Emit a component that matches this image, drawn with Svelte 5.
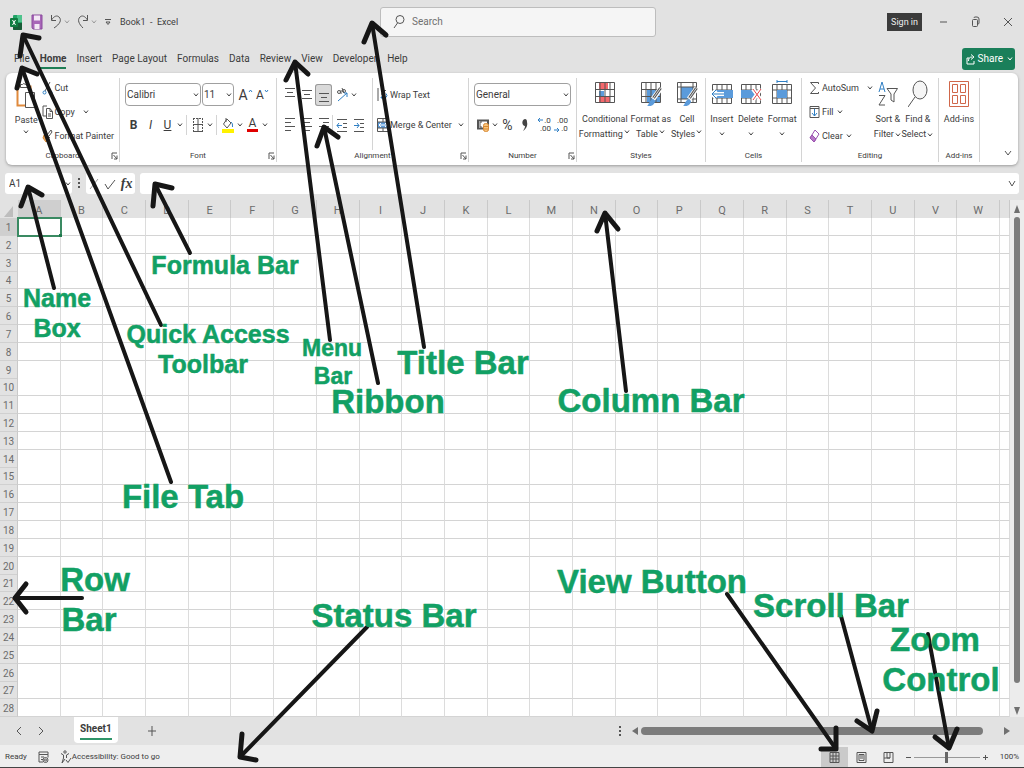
<script>
  let search = $state('');
  let cellName = $state('A1');
  let formula = $state('');
  let zoom = $state(50);
  let activeTab = $state('Home');

  const tabs = ['File', 'Home', 'Insert', 'Page Layout', 'Formulas', 'Data', 'Review', 'View', 'Developer', 'Help'];
  const columns = 'ABCDEFGHIJKLMNOPQRSTUVW'.split('');
  const rows = Array.from({ length: 28 }, (_, i) => i + 1);

  // tail, tip, then the two ends of the head
  const arrows = [
    [54, 288, 28, 187, 21, 206, 42, 195],
    [161, 325, 23, 35, 20, 56, 39, 38],
    [171, 482, 22, 68, 17, 88, 37, 74],
    [190, 253, 155, 184, 153, 206, 172, 188],
    [330, 340, 295, 62, 286, 80, 308, 74],
    [378, 383, 324, 127, 317, 146, 338, 137],
    [424, 347, 372, 23, 364, 42, 386, 35],
    [626, 391, 605, 213, 597, 231, 618, 229],
    [82, 598, 15, 598, 26, 584, 26, 612],
    [367, 627, 240, 757, 242, 734, 256, 760],
    [727, 594, 836, 749, 836, 728, 821, 749],
    [841, 616, 872, 731, 857, 721, 877, 711],
    [928, 634, 949, 748, 935, 737, 957, 729],
  ];

  const notes = [
    { text: 'Name', x: 57, y: 307, size: 'small' },
    { text: 'Box', x: 57, y: 337, size: 'small' },
    { text: 'Formula Bar', x: 225, y: 274, size: 'small' },
    { text: 'Quick Access', x: 208, y: 343, size: 'small' },
    { text: 'Toolbar', x: 203, y: 373, size: 'small' },
    { text: 'Menu', x: 332, y: 356, size: 'tiny' },
    { text: 'Bar', x: 333, y: 384, size: 'tiny' },
    { text: 'Title Bar', x: 463, y: 374, size: 'large' },
    { text: 'Ribbon', x: 388, y: 413, size: 'large' },
    { text: 'Column Bar', x: 651, y: 412, size: 'large' },
    { text: 'File Tab', x: 183, y: 508, size: 'large' },
    { text: 'Row', x: 95, y: 591, size: 'large' },
    { text: 'Bar', x: 89, y: 631, size: 'large' },
    { text: 'Status Bar', x: 394, y: 627, size: 'large' },
    { text: 'View Button', x: 652, y: 593, size: 'large' },
    { text: 'Scroll Bar', x: 831, y: 617, size: 'large' },
    { text: 'Zoom', x: 935, y: 651, size: 'large' },
    { text: 'Control', x: 941, y: 691, size: 'large' },
  ];
</script>

{#snippet chev()}
  <svg class="chev" width="8" height="8" viewBox="0 0 8 8"><path d="M2 2.500 4 5l2-2.500" /></svg>
{/snippet}

{#snippet launcher()}
  <svg class="launcher" width="7" height="8" viewBox="0 0 7 8"><path d="M1 7V1h5M2.500 3 6 7M6 3.500V7H3" /></svg>
{/snippet}

{#snippet bars(widths, from, top)}
  <svg width="12" height="16" viewBox="0 0 12 16">
    {#each widths as w, i}
      <path d="M{from === 'left' ? 1 : from === 'right' ? 11 - w : 6 - w / 2} {top + i * 4 + 0.5}h{w}" />
    {/each}
  </svg>
{/snippet}

{#snippet indent(dir)}
  <svg width="12" height="16" viewBox="0 0 12 16">
    <path d="M1 2.500h10M7 6.500h4M7 10.500h4M1 14.500h10" />
    <path class="blue" d={dir === 'out' ? 'M6 8.500H1M3 6 1 8.500 3 11' : 'M1 8.500h5M4 6l2 2.500L4 11'} />
  </svg>
{/snippet}

{#snippet gridIcon(kind)}
  <svg width="22" height="26" viewBox="0 0 22 26">
    {#if kind === 'conditional'}
      <path class="redfill" d="M5 3h9v7H5zM5 17h11v6H5z" />
      <path class="bluefill" d="M5 11h5v5H5z" />
    {:else if kind === 'table'}
      <path class="bluefill" d="M7 9h13v14H7z" />
    {:else if kind === 'cell'}
      <path class="bluefill" d="M5 7h12v12H5z" />
    {/if}
    {#if kind === 'cell'}
      <path d="M1.500 2.500h19v20h-19zM1.500 7h19M1.500 19h19M5 2.500v20M17 2.500v20" />
    {:else}
      <path d="M1.500 2.500h19v20h-19zM1.500 9.500h19M1.500 16.500h19M6 2.500v20M11 2.500v20M16 2.500v20" />
    {/if}
    {#if kind !== 'conditional'}
      <path d="m21 8-8 11" style:stroke="#fff" style:stroke-width="5" />
      <path d="m20.500 8-7 10" style:stroke-width="3" />
      <path d="m20.500 8-7 10" style:stroke="#ddd" />
      <path class="bluefill" d="M7 26c2-1 2-6 6-7l2 2c0 3-3 6-8 5Z" />
    {/if}
  </svg>
{/snippet}

{#snippet cellIcon(kind)}
  <svg width="22" height="28" viewBox="0 0 22 28">
    <path d="M1.500 4.500h19v19h-19zM1.500 10h19M1.500 18h19M6 4.500v19M11 4.500v19M16 4.500v19" />
    {#if kind === 'insert'}
      <path class="bluefill" d="M5 10h17v8H5z" />
      <path class="halo" d="M1 14h12M5 10l-4 4 4 4" />
      <path class="blue" d="M1 14h12M5 10l-4 4 4 4" />
    {:else if kind === 'delete'}
      <path class="bluefill" d="M1 10h12l3 4-3 4H1z" />
      <path class="halo" d="m13 9 8 11M21 9l-8 11" />
      <path class="red" d="m13 9 8 11M21 9l-8 11" />
    {:else}
      <path class="bluefill" d="M6 10h10v8H6z" />
      <path class="blue" d="M6 1.500h10M6 0v3M16 0v3" />
    {/if}
  </svg>
{/snippet}

<div class="app">
  <header class="title-bar">
    <div class="quick">
      <svg width="13" height="17" viewBox="0 0 13 17">
        <rect x="3" y="1" width="9" height="15" rx="1" fill="#21a366" style:stroke="none" />
        <path d="M7 1h4a1 1 0 0 1 1 1v6H7z" fill="#4fc48d" style:stroke="none" />
        <path d="M3 9h9v6a1 1 0 0 1-1 1H4a1 1 0 0 1-1-1z" fill="#185c37" style:stroke="none" />
        <rect x="0" y="4" width="8" height="9" rx="1" fill="#107c41" style:stroke="none" />
        <path d="m2.500 6 3 5M5.500 6l-3 5" style:stroke="#fff" />
      </svg>
      <button aria-label="Save" class="save">
        <svg width="12" height="16" viewBox="0 0 12 16">
          <path d="M1 1h10v14H2l-1-1.500z" fill="#a866b8" style:stroke="#8a4a9d" />
          <path d="M3 1.500h6v5H3zM3.500 10h5v5h-5z" fill="#f3e8f5" style:stroke="none" />
        </svg>
      </button>
      <button aria-label="Undo"><svg width="12" height="16" viewBox="0 0 12 16"><path d="M1.500 1v5.500H6M1.500 6C4 2 7 1 9 3c3 3 1 7-5 11" /></svg></button>
      {@render chev()}
      <button aria-label="Redo" class="redo"><svg width="12" height="16" viewBox="0 0 12 16"><path d="M10.500 1v5.500H6M10.500 6C8 2 5 1 3 3c-3 3-1 7 3 11" /></svg></button>
      {@render chev()}
      <button aria-label="Customize toolbar" class="customize"><svg width="8" height="8" viewBox="0 0 8 8"><path d="M1 1.500h6M2 4l2 2.500L6 4z" /></svg></button>
      <span class="doc">Book1&nbsp; -&nbsp; Excel</span>
    </div>
    <label class="search">
      <svg width="12" height="16" viewBox="0 0 12 16"><circle cx="7" cy="5.500" r="4" /><path d="M4.500 9 1 14" /></svg>
      <input type="text" placeholder="Search" aria-label="Search" bind:value={search} />
    </label>
    <div class="window">
      <button class="sign-in">Sign in</button>
      <button aria-label="Minimize"><svg width="10" height="12" viewBox="0 0 10 12"><path d="M1 6h7" /></svg></button>
      <button aria-label="Restore"><svg width="10" height="12" viewBox="0 0 10 12"><rect x="1.500" y="3.500" width="5" height="7" rx="1" /><path d="M3 2q0-1 1-1h2q2 0 2 2v4q0 1-1 1" /></svg></button>
      <button aria-label="Close"><svg width="10" height="12" viewBox="0 0 10 12"><path d="m1 2 8 8M9 2l-8 8" /></svg></button>
    </div>
  </header>

  <nav class="tabs">
    {#each tabs as tab}
      <button class:active={tab === activeTab} onclick={() => (activeTab = tab)}>{tab}</button>
    {/each}
    <button class="share">
      <svg width="9" height="12" viewBox="0 0 9 12"><path d="M3 5H1v6h7V8M2.500 8c0-3 1-4 4-4M5 1.500 8 4 5 6.500" /></svg>
      Share {@render chev()}
    </button>
  </nav>

  <section class="ribbon">
    <div class="group">
      <div class="body clipboard">
        <button class="big paste">
          <svg width="20" height="27" viewBox="0 0 20 27">
            <path d="M1.500 4.500h13v19h-13z" style:stroke="#e08a3c" style:stroke-width="2" />
            <path d="M4.500 5.500v-3h2q1-2 3 0h2v3z" fill="#fff" />
            <path d="M9.500 10.500h9v15h-9z" fill="#fff" />
          </svg>
          <span>Paste</span>{@render chev()}
        </button>
        <div class="stack">
          <button><svg width="11" height="14" viewBox="0 0 11 14"><path d="M3 1l5 9M8 1 3 10" /><circle class="blue" cx="2.500" cy="11.500" r="1.500" /><circle class="blue" cx="8.500" cy="11.500" r="1.500" /></svg>Cut</button>
          <button><svg width="11" height="14" viewBox="0 0 11 14"><path d="M4 11H1V1h4M4.500 3.500H8l2.500 3v7h-6zM8 3.500v3h2.500M6 9h3M6 11h3" /></svg>Copy <i></i>{@render chev()}</button>
          <button><svg width="11" height="14" viewBox="0 0 11 14"><path d="m5 6 4-5 1 2-3 4M3 5l5 4" /><path d="m2 6 5 4-3 3-3-4z" fill="#eaa55d" style:stroke="#d98a35" /></svg>Format Painter</button>
        </div>
      </div>
      <div class="caption">Clipboard{@render launcher()}</div>
    </div>

    <div class="group">
      <div class="body two-rows">
        <div class="line">
          <div class="pick font-name"><select aria-label="Font"><option>Calibri</option></select>{@render chev()}</div>
          <div class="pick font-size"><select aria-label="Font size"><option>11</option></select>{@render chev()}</div>
          <button class="tool gap" aria-label="Increase font size"><span class="grow">A</span><svg width="5" height="12" viewBox="0 0 5 12"><path class="blue" d="m1 3 1.500-2L4 3" /></svg></button>
          <button class="tool" aria-label="Decrease font size"><span>A</span><svg width="5" height="12" viewBox="0 0 5 12"><path class="blue" d="m1 1 1.500 2L4 1" /></svg></button>
        </div>
        <div class="line">
          <button class="tool"><b>B</b></button>
          <button class="tool"><em>I</em></button>
          <button class="tool"><u>U</u></button>
          {@render chev()}<hr />
          <button class="tool" aria-label="Borders"><svg width="12" height="16" viewBox="0 0 12 16"><path d="M1 1.500h10M1.500 1v13M10.500 1v13" stroke-dasharray="2 1" /><path d="M1 14.500h10M1 7.500h10M6 1v13" /></svg></button>
          {@render chev()}<hr />
          <button class="tool" aria-label="Fill color"><svg width="12" height="16" viewBox="0 0 12 16"><path d="M5 2 1.500 7 5 11l4-5zM4 1v4" /><path class="blue" d="M9 5q2 1 1.500 5" /><path d="M0 12h12v4H0z" fill="#fff200" style:stroke="none" /></svg></button>
          {@render chev()}
          <button class="tool" aria-label="Font color"><span class="font-color">A</span></button>
          {@render chev()}
        </div>
      </div>
      <div class="caption">Font{@render launcher()}</div>
    </div>

    <div class="group">
      <div class="body alignment">
        <div class="two-rows">
          <div class="line">
            <button class="tool" aria-label="Top align">{@render bars([10, 6, 10], 'center', 1)}</button>
            <button class="tool" aria-label="Middle align">{@render bars([10, 6, 10], 'center', 3)}</button>
            <button class="tool pressed" aria-label="Bottom align">{@render bars([10, 6, 10], 'center', 6)}</button>
            <hr />
            <button class="tool" aria-label="Orientation"><svg width="12" height="16" viewBox="0 0 12 16"><circle cx="3" cy="5" r="1.500" /><path d="M5 3v4M6 1l2 5" /><circle cx="8" cy="4" r="1.500" /><path class="blue" d="m2 14 9-8M8 6h3v4" /></svg></button>
            {@render chev()}
          </div>
          <div class="line">
            <button class="tool" aria-label="Align left">{@render bars([10, 6, 10, 6], 'left', 1)}</button>
            <button class="tool" aria-label="Center">{@render bars([10, 6, 10, 6], 'center', 1)}</button>
            <button class="tool" aria-label="Align right">{@render bars([10, 6, 10, 6], 'right', 1)}</button>
            <hr />
            <button class="tool" aria-label="Decrease indent">{@render indent('out')}</button>
            <button class="tool" aria-label="Increase indent">{@render indent('in')}</button>
          </div>
        </div>
        <div class="two-rows wrap">
          <button><svg width="12" height="16" viewBox="0 0 12 16"><path d="M1 1v13M4 3.500h5M4 7h3" /><path class="blue" d="M4 10.500h5q2-2 0-4M6 8.500l-2 2 2 2" /></svg>Wrap Text</button>
          <button><svg width="12" height="16" viewBox="0 0 12 16"><path class="bluefill" d="M1 5h10v6H1z" /><path d="M.500 1.500h11v13H.500zM.500 5h11M.500 11h11M6 1.500V5M6 11v3.500" /><path d="M2 8h8M4 6 2 8l2 2M8 6l2 2-2 2" style:stroke="#fff" /></svg>Merge &amp; Center <i></i>{@render chev()}</button>
        </div>
      </div>
      <div class="caption">Alignment{@render launcher()}</div>
    </div>

    <div class="group">
      <div class="body two-rows">
        <div class="line"><div class="pick format"><select aria-label="Number format"><option>General</option></select>{@render chev()}</div></div>
        <div class="line">
          <button class="tool" aria-label="Accounting format"><svg width="12" height="16" viewBox="0 0 12 16"><path d="M1 3.500h10v8H1z" style:stroke-width="2" /><path d="M5 5H3v5h2" /><rect x="6.500" y="6.500" width="5" height="8" rx="2" fill="#f6c27a" style:stroke="#d98a35" /><path d="M7 9.500h4M7 12h4" style:stroke="#d98a35" /></svg></button>
          {@render chev()}
          <button class="tool"><span class="sign">%</span></button>
          <button class="tool" aria-label="Comma style"><svg width="8" height="14" viewBox="0 0 8 14"><path d="M6 4c1 4-1 7-4 9 1-2 2-3 2-5C1 8 0 2 4 1q2 0 2 3z" fill="#444" style:stroke="none" /></svg></button>
          <hr />
          <button class="tool decimals"><span>&nbsp; .0</span><span>.00</span><svg width="6" height="6" viewBox="0 0 6 6"><path class="blue" d="M6 3H1M3 1 1 3l2 2" /></svg></button>
          <button class="tool decimals increase"><span>.00</span><span>&nbsp; .0</span><svg width="6" height="6" viewBox="0 0 6 6"><path class="blue" d="M0 3h5M3 1l2 2-2 2" /></svg></button>
        </div>
      </div>
      <div class="caption">Number{@render launcher()}</div>
    </div>

    <div class="group">
      <div class="body bigs styles">
        <button class="big">{@render gridIcon('conditional')}<span>Conditional</span><span>Formatting {@render chev()}</span></button>
        <button class="big">{@render gridIcon('table')}<span>Format as</span><span>Table {@render chev()}</span></button>
        <button class="big">{@render gridIcon('cell')}<span>Cell</span><span>Styles {@render chev()}</span></button>
      </div>
      <div class="caption">Styles</div>
    </div>

    <div class="group">
      <div class="body bigs cells">
        <button class="big">{@render cellIcon('insert')}<span>Insert</span>{@render chev()}</button>
        <button class="big">{@render cellIcon('delete')}<span>Delete</span>{@render chev()}</button>
        <button class="big">{@render cellIcon('format')}<span>Format</span>{@render chev()}</button>
      </div>
      <div class="caption">Cells</div>
    </div>

    <div class="group">
      <div class="body editing">
        <div class="stack">
          <button><svg width="11" height="14" viewBox="0 0 11 14"><path d="M9.500 3V1.500h-8l5 5.500-5 5.500h8V11" /></svg>AutoSum <i></i>{@render chev()}</button>
          <button><svg width="11" height="14" viewBox="0 0 11 14"><path d="M1 1.500h9v11H1zM1 3.500h9" /><path class="blue" d="M5.500 4v7M3 8l2.500 3L8 8" /></svg>Fill {@render chev()}</button>
          <button><svg width="11" height="14" viewBox="0 0 11 14"><path d="m6 1 4 4-5 8-4-4z" fill="#fff" style:stroke="#9b4fb0" /><path d="m3 6 4 4-2 3-4-4z" fill="#b678c6" style:stroke="#9b4fb0" /></svg>Clear {@render chev()}</button>
        </div>
        <button class="big">
          <svg width="20" height="28" viewBox="0 0 20 28"><path class="blue" d="m1 12 3-10 3 10M2 9h4" /><path d="M1 15.500h6L1 25h6M9 8.500h10.500L16 14v8l-3-2v-6z" /></svg>
          <span>Sort &amp;</span><span>Filter {@render chev()}</span>
        </button>
        <button class="big">
          <svg width="20" height="28" viewBox="0 0 20 28"><ellipse cx="12" cy="10" rx="7" ry="9" fill="#f5f5f5" /><path d="M7 17 0 27" /></svg>
          <span>Find &amp;</span><span>Select {@render chev()}</span>
        </button>
      </div>
      <div class="caption">Editing</div>
    </div>

    <div class="group">
      <div class="body bigs">
        <button class="big">
          <svg width="20" height="28" viewBox="0 0 20 28"><path d="M.500 1.500h19v25H.500zM3.500 4.500h5v8h-5zM11.500 4.500h5v8h-5zM3.500 15.500h5v8h-5zM11.500 15.500h5v8h-5z" style:stroke="#d0674a" /></svg>
          <span>Add-ins</span>
        </button>
      </div>
      <div class="caption">Add-ins</div>
    </div>

    <button class="collapse" aria-label="Collapse ribbon"><svg width="10" height="8" viewBox="0 0 10 8"><path d="m2 2 3 4 3-4" /></svg></button>
  </section>

  <section class="formula-row">
    <div class="name-box"><input type="text" aria-label="Name box" bind:value={cellName} />{@render chev()}</div>
    <svg width="4" height="14" viewBox="0 0 4 14"><path d="M2 1v12" stroke-dasharray="2 2" style:stroke-width="2" /></svg>
    <div class="entry">
      <button aria-label="Cancel"><svg width="10" height="12" viewBox="0 0 10 12"><path d="m1 1 8 10M9 1 1 11" style:stroke="#999" /></svg></button>
      <button aria-label="Enter"><svg width="12" height="12" viewBox="0 0 12 12"><path d="m1 6 3 5 7-9" /></svg></button>
      <button class="fx">fx</button>
    </div>
    <div class="formula"><input type="text" aria-label="Formula" bind:value={formula} /><svg width="10" height="8" viewBox="0 0 10 8"><path d="m2 1 3 5 3-5" /></svg></div>
  </section>

  <main class="sheet">
    <table>
      <thead>
        <tr>
          <th class="corner"><svg width="10" height="13" viewBox="0 0 10 13"><path d="M9 1v11H0z" fill="#bdbdbd" style:stroke="none" /></svg></th>
          {#each columns as col}
            <th class:selected={col === 'A'}>{col}</th>
          {/each}
          <th></th>
        </tr>
      </thead>
      <tbody>
        {#each rows as row}
          <tr>
            <th class:selected={row === 1}>{row}</th>
            {#each columns as col}
              <td class:current={row === 1 && col === 'A'}></td>
            {/each}
            <td></td>
          </tr>
        {/each}
      </tbody>
    </table>
    <div class="scroll-y">
      <svg width="8" height="8" viewBox="0 0 8 8"><path class="tri" d="M4 0 7 8H1z" /></svg>
      <div class="track"><div class="thumb"></div></div>
      <svg width="8" height="8" viewBox="0 0 8 8"><path class="tri" d="M1 0h6L4 8z" /></svg>
    </div>
  </main>

  <section class="sheet-tabs">
    <button class="nav" aria-label="Previous sheet"><svg width="8" height="10" viewBox="0 0 8 10"><path d="M6 1 2 5l4 4" /></svg></button>
    <button class="nav" aria-label="Next sheet"><svg width="8" height="10" viewBox="0 0 8 10"><path d="m2 1 4 4-4 4" /></svg></button>
    <button class="sheet-tab"><span>Sheet1</span></button>
    <button class="add" aria-label="New sheet"><svg width="10" height="12" viewBox="0 0 10 12"><path d="M5 1v10M1 6h8" /></svg></button>
    <div class="scroll-x">
      <svg width="4" height="12" viewBox="0 0 4 12"><path d="M2 1v11" stroke-dasharray="2 2" style:stroke-width="2" /></svg>
      <div class="bar">
        <svg width="6" height="8" viewBox="0 0 6 8"><path class="tri" d="M6 0v8L0 4z" /></svg>
        <div class="track"><div class="thumb"></div></div>
        <svg width="6" height="8" viewBox="0 0 6 8"><path class="tri" d="m0 0 6 4-6 4z" /></svg>
      </div>
    </div>
  </section>

  <footer class="status">
    <span>Ready</span>
    <svg width="11" height="13" viewBox="0 0 11 13"><path d="M1 1h9v2.500H1zM1 3.500V11h4M3 6h3M3 8.500h2M10 3.500v3" /><circle cx="7.500" cy="9" r="2.500" /><circle cx="7.500" cy="9" r="1" /></svg>
    <span class="access"><svg width="12" height="14" viewBox="0 0 12 14"><circle cx="5" cy="2" r="1.200" /><path d="M1 3.500 3.500 5v3L2 13l3-4M9 3.500 6.500 5v3M6 10l2 2.500L11 8" /></svg>Accessibility: Good to go</span>
    <div class="views">
      <button class="on" aria-label="Normal view"><svg width="11" height="13" viewBox="0 0 11 13"><path d="M1 1.500h9v10H1zM1 5h9M1 8h9M4 1.500v10M7 1.500v10" /></svg></button>
      <button aria-label="Page layout view"><svg width="11" height="13" viewBox="0 0 11 13"><path d="M1 1.500h9v10H1zM3 3.500h5v6H3zM4 5h3M4 7h3" /></svg></button>
      <button aria-label="Page break preview"><svg width="11" height="13" viewBox="0 0 11 13"><path d="M1 1.500h9v10H1zM4 1.500V7h3V1.500M7 7H1" /></svg></button>
    </div>
    <div class="zoom">
      <button aria-label="Zoom out"><svg width="7" height="7" viewBox="0 0 7 7"><path d="M1 3.500h5" /></svg></button>
      <input type="range" min="0" max="100" aria-label="Zoom" bind:value={zoom} />
      <button aria-label="Zoom in"><svg width="7" height="7" viewBox="0 0 7 7"><path d="M1 3.500h5M3.500 1v5" /></svg></button>
    </div>
    <span>100%</span>
  </footer>

  <svg class="notes" viewBox="0 0 1024 768">
    {#each arrows as [x1, y1, x2, y2, ax, ay, bx, by]}
      <path class="shaft" d="M{x1} {y1}L{x2} {y2}" />
      <path class="head" d="M{ax} {ay}L{x2} {y2}L{bx} {by}" />
    {/each}
    {#each notes as note}
      <text class={note.size} x={note.x} y={note.y} text-anchor="middle">{note.text}</text>
    {/each}
  </svg>
</div>

<style>
  :global(body) {
    background: #e2e2e2;
  }

  .app {
    position: relative;
    display: flex;
    flex-direction: column;
    height: 100vh;
    box-sizing: border-box;
    border-bottom: 1px solid #444;
    overflow: hidden;
    background: #e2e2e2;
    color: #3c3c3c;
    font-family: Roboto, sans-serif;
    font-size: 10px;
    line-height: 14px;
  }

  button, input, select {
    font: inherit;
    color: inherit;
    border: none;
    background: none;
    padding: 0;
    margin: 0;
    min-width: 0;
    outline: none;
  }

  button {
    display: flex;
    align-items: center;
    justify-content: center;
    white-space: nowrap;
  }

  svg {
    flex: none;
    fill: none;
    stroke: #555;
    stroke-width: 1;
  }

  .blue { stroke: #2f7fc4; }
  .red { stroke: #e5484d; }
  .halo { stroke: #fff; stroke-width: 4; }
  .bluefill { fill: #5b9bdb; stroke: none; }
  .redfill { fill: #f4686c; stroke: none; }
  .tri { fill: #707070; stroke: none; }
  .chev { stroke: #444; }

  .title-bar {
    display: grid;
    grid-template-columns: 380fr 276fr 368fr;
    align-items: center;
    height: 44px;
    flex: none;
  }

  .quick {
    display: flex;
    align-items: center;
    padding-left: 10px;
  }

  .quick .save { margin: 0 7px 0 8px; }
  .quick .redo { margin-left: 6px; }
  .quick .chev { stroke: #999; margin-left: 1px; }
  .quick .customize { margin-left: 6px; }
  .doc { margin-left: 8px; font-size: 9px; }

  .search {
    display: flex;
    align-items: center;
    gap: 7px;
    height: 28px;
    padding: 0 12px;
    border: 1px solid #bdbdbd;
    border-radius: 3px;
    background: #f5f5f5;
  }

  .search input { flex: 1; }
  .search input::placeholder { color: #707070; }

  .window {
    display: flex;
    align-items: center;
    justify-content: flex-end;
    gap: 22px;
    padding-right: 11px;
  }

  .sign-in {
    height: 18px;
    padding: 0 4px;
    margin-right: -5px;
    background: #3b3b3b;
    color: #eee;
    font-size: 9px;
  }

  .tabs {
    display: flex;
    align-items: center;
    gap: 10px;
    height: 29px;
    flex: none;
    padding: 0 9px 0 14px;
  }

  .tabs button {
    height: 20px;
    padding-top: 2px;
    border-bottom: 2px solid transparent;
  }

  .tabs .active {
    font-weight: bold;
    border-color: #1e7e55;
  }

  .tabs .share {
    height: 22px;
    box-sizing: border-box;
    margin-left: auto;
    padding: 0 1px 0 4px;
    gap: 3px;
    border: none;
    border-radius: 3px;
    background: #1a7f5a;
    color: #fff;
  }

  .share svg { stroke: #fff; }

  .ribbon {
    position: relative;
    display: grid;
    grid-template-columns: 114fr 157fr 192fr 108fr 129fr 96fr 137fr 41fr 38fr;
    height: 92px;
    flex: none;
    margin: 0 6px;
    border-radius: 6px;
    background: #fff;
    box-shadow: 0 1px 3px #9a9a9a;
    font-size: 9px;
  }

  .group {
    display: flex;
    flex-direction: column;
    min-width: 0;
    margin: 5px 0 3px;
    border-right: 1px solid #d4d4d4;
  }

  .body {
    flex: 1;
    min-height: 0;
    padding: 0 5px;
  }

  .caption {
    position: relative;
    text-align: center;
    font-size: 8px;
    line-height: 12px;
  }

  .launcher {
    position: absolute;
    right: 1px;
    top: 2px;
  }

  .clipboard, .editing, .alignment, .bigs { display: flex; }
  .bigs { justify-content: space-around; padding: 0 2px; }

  .big {
    flex-direction: column;
    justify-content: flex-start;
    padding-top: 2px;
  }

  .big > svg:first-child { margin-bottom: 4px; }
  .big span { display: flex; align-items: center; line-height: 15px; }
  .styles svg:first-child { margin-bottom: 6px; }
  .paste { padding-top: 4px; width: 34px; }
  .cells .big .chev { margin-top: 3px; }

  .stack {
    display: flex;
    flex-direction: column;
    justify-content: space-between;
    align-items: flex-start;
    height: 62px;
    padding-top: 3px;
  }

  .stack button { gap: 2px; }
  .stack i, .wrap i { width: 3px; }
  .editing { justify-content: space-between; padding: 0 4px 0 7px; }

  .two-rows {
    display: flex;
    flex-direction: column;
    gap: 7px;
    padding-top: 5px;
  }

  .line { display: flex; align-items: center; height: 23px; }

  .pick { position: relative; height: 23px; }

  .pick select {
    width: 100%;
    height: 100%;
    padding: 0 1px;
    border: 1px solid #a0a0a0;
    border-radius: 4px;
    appearance: none;
    font-size: 10px;
  }

  .pick .chev {
    position: absolute;
    right: 1px;
    top: 8px;
    pointer-events: none;
  }

  .font-name { flex: 78; }
  .font-size { flex: 33; margin-left: 1px; }
  .format { flex: 1; }

  .tool { width: 17px; height: 22px; flex: none; font-size: 12px; }
  .tool.gap { margin-left: 3px; }
  .tool .grow { font-size: 14px; }
  .tool .sign { font-size: 14px; }
  .font-color { line-height: 12px; border-bottom: 3px solid #e00000; padding: 0 2px; }
  .pressed { background: #d9d9d9; box-shadow: inset 0 0 0 1px #999; border-radius: 3px; }

  hr {
    width: 1px;
    height: 20px;
    margin: 0 2px;
    border: none;
    background: #d4d4d4;
  }

  .alignment { padding: 0 0 0 4px; }
  .alignment hr { margin: 0; background: transparent; }
  .alignment .line + .line hr { background: #d4d4d4; }
  .wrap { margin-left: 5px; border-left: 1px solid #d4d4d4; padding-left: 4px; }
  .wrap button { height: 23px; gap: 1px; justify-content: flex-start; }

  .decimals {
    position: relative;
    flex-direction: column;
    font-size: 8px;
    line-height: 8px;
  }

  .decimals svg { position: absolute; left: 0; top: 3px; }
  .increase svg { top: auto; bottom: 3px; }

  .collapse { align-self: end; margin: 0 0 8px 18px; }

  .formula-row {
    display: flex;
    align-items: center;
    gap: 5px;
    height: 21px;
    flex: none;
    margin: 8px 5px 6px;
  }

  .name-box, .entry, .formula {
    display: flex;
    align-items: center;
    height: 21px;
    border-radius: 3px;
    background: #fff;
  }

  .name-box { width: 67px; }
  .name-box input { flex: 1; padding-left: 4px; }
  .entry { width: 49px; justify-content: space-around; }
  .fx { font: italic bold 14px "Liberation Serif", serif; }
  .formula { flex: 1; padding-right: 2px; }
  .formula input { flex: 1; }

  .sheet {
    display: flex;
    flex: 1;
    min-height: 0;
  }

  table {
    flex: 1;
    display: grid;
    grid-template-rows: 18px 1fr;
    font-size: 11px;
    color: #6c6c6c;
  }

  tr {
    display: grid;
    grid-template-columns: 18px repeat(23, 43fr) 10fr;
    min-height: 0;
  }

  tbody { display: grid; grid-template-rows: repeat(28, 1fr); min-height: 0; font-size: 10px; }

  th {
    display: flex;
    align-items: center;
    justify-content: center;
    box-sizing: border-box;
    min-width: 0;
    padding: 0;
    font-weight: normal;
    border-right: 1px solid #c9c9c9;
  }

  thead th { padding-top: 4px; border-bottom: 1px solid #b5b5b5; }
  thead .corner { border-right: none; }
  tbody th { padding-top: 3px; border-bottom: 1px solid #d0d0d0; }
  th.selected { background: #cfcfcf; }

  td {
    position: relative;
    box-sizing: border-box;
    padding: 0;
    background: #fff;
    border-right: 1px solid #dcdcdc;
    border-bottom: 1px solid #d4d4d4;
  }

  .current {
    outline: 2px solid #3a8a62;
    outline-offset: -1px;
    z-index: 1;
  }

  .current::after {
    content: '';
    position: absolute;
    right: -2px;
    bottom: -2px;
    width: 3px;
    height: 3px;
    background: #1f7a4d;
  }

  .scroll-y {
    display: flex;
    flex-direction: column;
    align-items: center;
    justify-content: space-between;
    width: 14px;
    padding: 5px 0 2px;
    background: #ececec;
  }

  .scroll-y .track { flex: 1; padding-top: 4px; }
  .scroll-y .thumb { width: 6px; height: 95%; border-radius: 3px; background: #7c7c7c; }

  .sheet-tabs {
    display: flex;
    align-items: center;
    height: 28px;
    flex: none;
    padding-left: 8px;
  }

  .nav { width: 22px; }

  .sheet-tab {
    align-self: flex-start;
    height: 26px;
    margin-left: 22px;
    padding: 0 6px;
    border-radius: 0 0 4px 4px;
    background: #fff;
    font-weight: bold;
  }

  .sheet-tab span { border-bottom: 2px solid #2f9468; line-height: 18px; }
  .add { width: 20px; margin-left: 24px; }

  .scroll-x {
    display: flex;
    align-items: center;
    gap: 10px;
    width: 40%;
    margin-left: auto;
  }

  .bar {
    display: flex;
    align-items: center;
    flex: 1;
    gap: 3px;
    height: 14px;
    padding-right: 14px;
  }

  .bar .track { flex: 1; }
  .bar .thumb { width: 95%; height: 8px; border-radius: 4px; background: #7c7c7c; }

  .status {
    display: flex;
    align-items: center;
    gap: 11px;
    height: 22px;
    flex: none;
    padding: 2px 5px 0;
    box-sizing: border-box;
    background: #eee;
    font-size: 8px;
  }

  .access { display: flex; align-items: center; }
  .views { display: flex; align-self: stretch; margin-left: auto; }
  .views button { width: 27px; }
  .views .on { background: #cacaca; }
  .zoom { display: flex; align-items: center; gap: 2px; margin-left: -8px; }

  input[type='range'] {
    appearance: none;
    width: 66px;
    height: 12px;
    background: linear-gradient(#999, #999) no-repeat center / 100% 1px;
  }

  input[type='range']::-webkit-slider-thumb {
    appearance: none;
    width: 3px;
    height: 11px;
    background: #666;
  }

  .notes {
    position: absolute;
    inset: 0;
    z-index: 2;
    width: 100%;
    pointer-events: none;
    stroke-linecap: round;
    stroke-linejoin: round;
  }

  .shaft { stroke: #161616; stroke-width: 4; }
  .head { stroke: #161616; stroke-width: 5; }

  text {
    font-family: "Liberation Sans", Arial, sans-serif;
    font-weight: bold;
    fill: #12a064;
    stroke: #12a064;
    stroke-width: 0.5;
  }

  .tiny { font-size: 23px; }
  .small { font-size: 25px; }
  .large { font-size: 33px; }
</style>
